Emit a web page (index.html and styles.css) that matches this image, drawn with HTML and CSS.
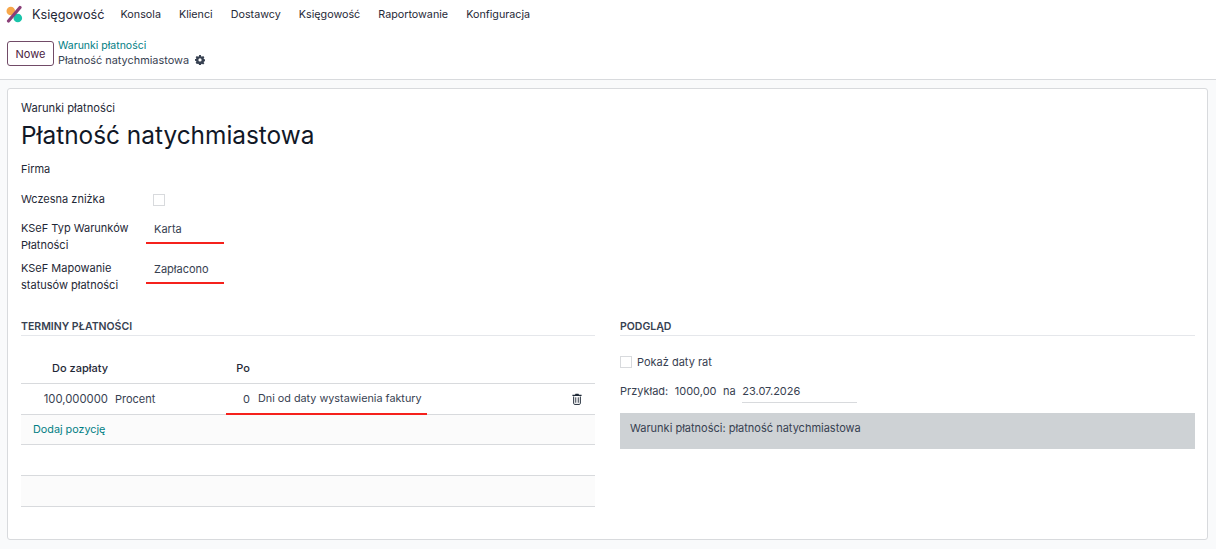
FILE: index.html
```html
<!DOCTYPE html>
<html lang="pl">
<head>
    <meta charset="UTF-8">
    <title>Płatność natychmiastowa</title>
    <link rel="stylesheet" href="styles.css">
</head>
<body>

    <!-- Top Navbar -->
    <nav class="navbar">
        <svg class="app-logo" viewBox="0 0 18 18" width="18" height="18">
            <circle cx="4.800" cy="6" r="4.300" fill="#f7a74a"/>
            <circle cx="11.800" cy="13" r="4.300" fill="#1ac4aa"/>
            <path d="M14 2.500 L2.500 16" stroke="#8a3f78" stroke-width="3.200" stroke-linecap="round"/>
        </svg>
        <span class="app-name">Księgowość</span>
        <a>Konsola</a>
        <a>Klienci</a>
        <a>Dostawcy</a>
        <a>Księgowość</a>
        <a>Raportowanie</a>
        <a>Konfiguracja</a>
    </nav>

    <!-- Control Panel -->
    <div class="control-panel">
        <button class="btn-new">Nowe</button>
        <div class="breadcrumb">
            <a class="link">Warunki płatności</a>
            <div class="current">
                Płatność natychmiastowa
                <svg class="gear" viewBox="0 0 16 16" width="10" height="10">
                    <path fill-rule="evenodd" d="M6.6 0h2.8l.4 2.100 1.300.6L13 1.500l2 2-1.200 1.800.6 1.300 2.100.4v2.800l-2.100.4-.6 1.300 1.200 1.800-2 2-1.900-1.200-1.300.6-.4 2.100H6.600l-.4-2.100-1.300-.6L3 14.500l-2-2 1.200-1.800-.6-1.300L-.5 9V6.600l2.100-.4.6-1.300L1 3.500l2-2 1.900 1.200 1.300-.6zM8 5.300a2.600 2.600 0 1 0 0 5.200 2.600 2.600 0 0 0 0-5.200z" fill="#374151"/>
                </svg>
            </div>
        </div>
    </div>

    <!-- Form Sheet -->
    <main class="sheet">
        <div class="eyebrow">Warunki płatności</div>
        <h1>Płatność natychmiastowa</h1>

        <div class="field-row firma">
            <label>Firma</label>
        </div>
        <div class="field-row discount">
            <label>Wczesna zniżka</label>
            <span class="checkbox"></span>
        </div>
        <div class="field-row tall first">
            <label>KSeF Typ Warunków Płatności</label>
            <span class="value red-line">Karta</span>
        </div>
        <div class="field-row tall">
            <label>KSeF Mapowanie statusów płatności</label>
            <span class="value red-line">Zapłacono</span>
        </div>

        <div class="columns">
            <!-- Payment terms -->
            <section>
                <h2>Terminy płatności</h2>
                <table class="terms-table">
                    <thead>
                        <tr>
                            <th class="col-amount num">Do zapłaty</th>
                            <th class="col-type"></th>
                            <th class="col-after num">Po</th>
                            <th class="col-unit"></th>
                            <th></th>
                        </tr>
                    </thead>
                    <tbody>
                        <tr>
                            <td class="num amount">100,000000</td>
                            <td>Procent</td>
                            <td class="num red-cell">0</td>
                            <td class="red-cell unit">Dni od daty wystawienia faktury</td>
                            <td class="trash-cell">
                                <svg viewBox="0 0 12 14" width="10" height="12">
                                    <path d="M4.200 0.600h3.600l.6 1.400H11.500v1.300H.5V2h3.100z" fill="#1f2937"/>
                                    <path d="M2 4v8.200c0 .8.500 1.300 1.200 1.300h5.600c.7 0 1.200-.5 1.200-1.300V4" fill="none" stroke="#1f2937" stroke-width="1.200"/>
                                    <path d="M4.500 5v6.500M7.500 5v6.500" stroke="#1f2937" stroke-width="1.100"/>
                                </svg>
                            </td>
                        </tr>
                        <tr class="shaded add-row">
                            <td colspan="5"><a class="link add-line">Dodaj pozycję</a></td>
                        </tr>
                        <tr>
                            <td colspan="5"></td>
                        </tr>
                        <tr class="shaded">
                            <td colspan="5"></td>
                        </tr>
                    </tbody>
                </table>
            </section>

            <!-- Preview -->
            <section>
                <h2>Podgląd</h2>
                <div class="show-dates">
                    <span class="checkbox"></span>
                    <span>Pokaż daty rat</span>
                </div>
                <div class="example">
                    <span>Przykład:</span>
                    <span>1000,00</span>
                    <span>na</span>
                    <span class="date-field">23.07.2026</span>
                </div>
                <div class="preview-box">Warunki płatności: płatność natychmiastowa</div>
            </section>
        </div>
    </main>

</body>
</html>
```

FILE: styles.css
```css
/* Global Styles */
body {
    font-family: Inter, "Liberation Sans", sans-serif;
    font-size: 11px;
    background-color: #f9fafb;
    margin: 0;
    height: 549px;
    overflow: hidden;
    color: #374151;
}

/* Navbar */
.navbar {
    display: flex;
    align-items: center;
    height: 28px;
    padding-left: 6px;
    background: #fff;
    color: #1f2937;
    font-size: 10.75px;
}

.app-logo {
    margin-right: 8px;
}

.app-name {
    font-size: 12.7px;
    margin-right: 16px;
}

.navbar a {
    margin-right: 18px;
}

/* Control Panel */
.control-panel {
    display: flex;
    align-items: center;
    gap: 4px;
    height: 51px;
    padding-left: 7px;
    background: #fff;
    border-bottom: 1px solid #d8dadd;
}

.btn-new {
    width: 47px;
    height: 25px;
    padding: 0;
    font: inherit;
    color: #4a2342;
    background: #fff;
    border: 1px solid #714b67;
    border-radius: 3px;
}

.breadcrumb {
    margin-top: -3px;
    line-height: 14px;
}

.breadcrumb .link {
    font-size: 10.5px;
}

.link {
    color: #017e84;
}

.current {
    display: flex;
    align-items: center;
    gap: 6px;
    font-size: 10.9px;
    color: #374151;
}

/* Sheet */
.sheet {
    height: 452px;
    margin: 8px 8px 0 7px;
    padding: 12px 13px 0;
    box-sizing: border-box;
    background: #fff;
    border: 1px solid #d8dadd;
    border-radius: 3px;
}

.eyebrow {
    font-size: 11.2px;
    line-height: 15px;
    color: #1f2937;
}

h1 {
    margin: 0;
    font-size: 24.4px;
    font-weight: 400;
    line-height: 39px;
    color: #111827;
}

.field-row {
    display: flex;
    color: #1f2937;
}

.field-row label {
    width: 125px;
    flex: none;
    line-height: 17px;
}

.firma {
    margin-top: 6px;
}

.discount {
    margin-top: 13px;
    align-items: center;
}

.tall {
    margin-top: 6px;
    height: 34px;
}

.tall.first {
    margin-top: 12px;
}

.checkbox {
    display: inline-block;
    width: 10px;
    height: 10px;
    background: #fff;
    border: 1px solid #d8dadd;
}

.discount .checkbox {
    margin-left: 7px;
}

.value {
    color: #374151;
}

.red-line {
    width: 78px;
    height: 24px;
    padding: 1px 0 0 8px;
    box-sizing: border-box;
    line-height: 17px;
    border-bottom: 2px solid #f5211c;
}

/* Two Columns */
.columns {
    display: grid;
    grid-template-columns: 574px 575px;
    column-gap: 25px;
    margin-top: 23px;
}

h2 {
    margin: 0;
    height: 18px;
    font-size: 10.5px;
    font-weight: 600;
    line-height: 19px;
    text-transform: uppercase;
    color: #374151;
    border-bottom: 1px solid #e5e7eb;
}

/* Terms Table */
.terms-table {
    width: 100%;
    margin-top: 17px;
    border-collapse: separate;
    border-spacing: 0;
    table-layout: fixed;
}

.terms-table th {
    height: 30px;
    padding: 0 4px 0 0;
    font-weight: 500;
    color: #1f2937;
    border-bottom: 1px solid #d8dadd;
    text-align: left;
}

.terms-table td {
    height: 30px;
    padding: 0 4px 0 0;
    border-bottom: 1px solid #d8dadd;
}

.terms-table .num {
    text-align: right;
}

.col-amount {
    width: 87px;
}

.col-type {
    width: 110px;
}

.col-after {
    width: 24px;
}

.col-unit {
    width: 169px;
}

.terms-table td:nth-child(2) {
    padding-left: 3px;
}

.terms-table .amount {
    font-size: 11.3px;
}

.terms-table .unit {
    padding-left: 4px;
    font-size: 10.8px;
}

.terms-table .red-cell {
    height: 29px;
    border-bottom: 2px solid #f5211c;
}

.trash-cell svg {
    display: block;
    margin-left: auto;
    margin-right: 9px;
}

.shaded td {
    background: #fbfbfb;
}

.terms-table .add-row td {
    height: 30px;
    padding-bottom: 1px;
    box-sizing: border-box;
}

.add-line {
    padding-left: 12px;
    font-size: 10.8px;
}

/* Preview */
.show-dates {
    display: flex;
    align-items: center;
    gap: 5px;
    margin-top: 19px;
}

.example {
    display: flex;
    gap: 6.5px;
    margin-top: 15px;
    height: 29px;
    line-height: 15px;
}

.date-field {
    width: 115px;
    height: 18px;
    border-bottom: 1px solid #d8dadd;
}

.preview-box {
    height: 36px;
    padding: 8px 10px;
    box-sizing: border-box;
    line-height: 15px;
    background: #ced2d5;
}
```
